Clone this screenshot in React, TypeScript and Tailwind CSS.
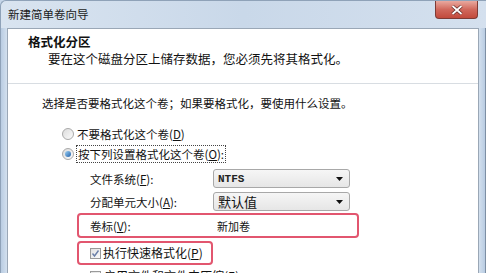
import React from 'react';

const cjk = 'font-["Noto_Sans_CJK_SC","Liberation_Sans",sans-serif]';

function Radio({ checked }: { checked?: boolean }) {
  return (
    <span className="w-[12px] h-[12px] rounded-full border border-[#a9a9a9] bg-gradient-to-br from-[#dcdcdc] to-[#fbfbfb] flex items-center justify-center shrink-0">
      {checked && (
        <span className="w-[6px] h-[6px] rounded-full bg-gradient-to-br from-[#9fd3f5] to-[#1d5fa8]" />
      )}
    </span>
  );
}

function Checkbox({ checked }: { checked?: boolean }) {
  return (
    <span className="w-[11px] h-[11px] border border-[#9a9a9a] bg-gradient-to-br from-[#e2e2e2] to-[#fafafa] flex items-center justify-center shrink-0">
      {checked && (
        <svg width="9" height="9" viewBox="0 0 9 9">
          <path d="M1.5 4.5 L3.5 7 L7.5 1.5" fill="none" stroke="#6a7fa8" strokeWidth="1.4" />
        </svg>
      )}
    </span>
  );
}

function Combo({ value, mono }: { value: string; mono?: boolean }) {
  return (
    <div className="w-[137px] h-[19px] rounded-[3px] border border-[#a8a8a8] bg-gradient-to-b from-[#f6f6f6] to-[#e6e6e6] flex items-center pl-[4px] pr-[6px]">
      <span
        className={
          mono
            ? 'flex-1 font-["Liberation_Mono",monospace] font-bold text-[11px] text-[#222]'
            : 'flex-1 text-[13px] text-[#111]'
        }
      >
        {value}
      </span>
      <svg width="7" height="4" viewBox="0 0 7 4">
        <path d="M0 0 H7 L3.5 4 Z" fill="#111" />
      </svg>
    </div>
  );
}

export default function App() {
  return (
    <div className={`w-[486px] h-[273px] overflow-hidden flex flex-col bg-[#c6d6e9] ${cjk}`}>
      {/* Title bar */}
      <div className="h-[28px] shrink-0 relative flex items-center pl-[7px] bg-gradient-to-r from-[#d9e4f0] via-[#c9d8e9] to-[#d4e0ee] border-t border-l border-[#8fa2b8] rounded-tl-[6px]">
        <span className="text-[11.5px] text-[#1b1b1b] leading-none">新建简单卷向导</span>
        <div className="absolute right-[8px] top-0 w-[43px] h-[18px] rounded-b-[4px] border border-t-0 border-[#7e3b35] bg-gradient-to-b from-[#e9a99f] via-[#d0685c] to-[#c24a3c] flex items-center justify-center">
          <svg width="12" height="10" viewBox="0 0 12 10">
            <path d="M1.5 1 L10.5 9 M10.5 1 L1.5 9" stroke="#5a2520" strokeWidth="3.2" />
            <path d="M1.5 1 L10.5 9 M10.5 1 L1.5 9" stroke="#ffffff" strokeWidth="1.8" />
          </svg>
        </div>
      </div>

      {/* Frame + client */}
      <div className="flex-1 flex border-l border-[#8fa2b8] min-h-0">
        <div className="w-[6px] shrink-0 bg-gradient-to-r from-[#b9cce2] to-[#d3e0ee]" />
        <div className="flex-1 flex flex-col bg-white border-t border-l border-r border-[#9aa7b6] min-h-0">
          {/* Header */}
          <div className="h-[55px] shrink-0 border-b border-[#d8dde2] pt-[5px] pl-[20px] leading-[16px]">
            <div className="text-[12.5px] font-bold text-[#111]">格式化分区</div>
            <div className="text-[12.5px] text-[#111] pl-[20px] mt-[1px]">要在这个磁盘分区上储存数据，您必须先将其格式化。</div>
          </div>

          {/* Body */}
          <div className="flex flex-col text-[11.5px] text-[#111] leading-[16px]">
            <div className="ml-[34px] mt-[11px]">选择是否要格式化这个卷；如果要格式化，要使用什么设置。</div>

            <div className="ml-[54px] mt-[15px] h-[16px] flex items-center gap-[3px]">
              <Radio />
              <span>
                不要格式化这个卷(<span className="underline">D</span>)
              </span>
            </div>

            <div className="ml-[54px] mt-[4px] h-[16px] flex items-center gap-[3px]">
              <Radio checked />
              <span className="outline outline-1 outline-dotted outline-[#444] px-[1px]">
                按下列设置格式化这个卷(<span className="underline">O</span>):
              </span>
            </div>

            <div className="ml-[82px] mt-[7px] h-[19px] flex items-center">
              <span className="w-[123px]">
                文件系统(<span className="underline">F</span>):
              </span>
              <Combo value="NTFS" mono />
            </div>

            <div className="ml-[82px] mt-[4px] h-[19px] flex items-center">
              <span className="w-[123px]">
                分配单元大小(<span className="underline">A</span>):
              </span>
              <Combo value="默认值" />
            </div>

            <div className="ml-[69px] mt-[2px] w-[282px] h-[25px] border-[2.5px] border-[#e2566f] rounded-[4px] flex items-center pl-[11px]">
              <span className="w-[127px]">
                卷标(<span className="underline">V</span>):
              </span>
              <span className="text-[11px]">新加卷</span>
            </div>

            <div className="ml-[69px] mt-[3px] w-[136px] h-[24px] border-[2.5px] border-[#e2566f] rounded-[4px] flex items-center pl-[11px] gap-[2px]">
              <Checkbox checked />
              <span className="text-[12px]">
                执行快速格式化(<span className="underline">P</span>)
              </span>
            </div>

            <div className="ml-[82px] mt-[3px] h-[16px] flex items-center gap-[3px]">
              <Checkbox />
              <span className="text-[12px]">
                启用文件和文件夹压缩(<span className="underline">E</span>)
              </span>
            </div>
          </div>
        </div>
        <div className="w-[7px] shrink-0 bg-gradient-to-r from-[#d3e0ee] to-[#b9cce2] border-r border-[#7d8fa4]" />
      </div>
    </div>
  );
}
